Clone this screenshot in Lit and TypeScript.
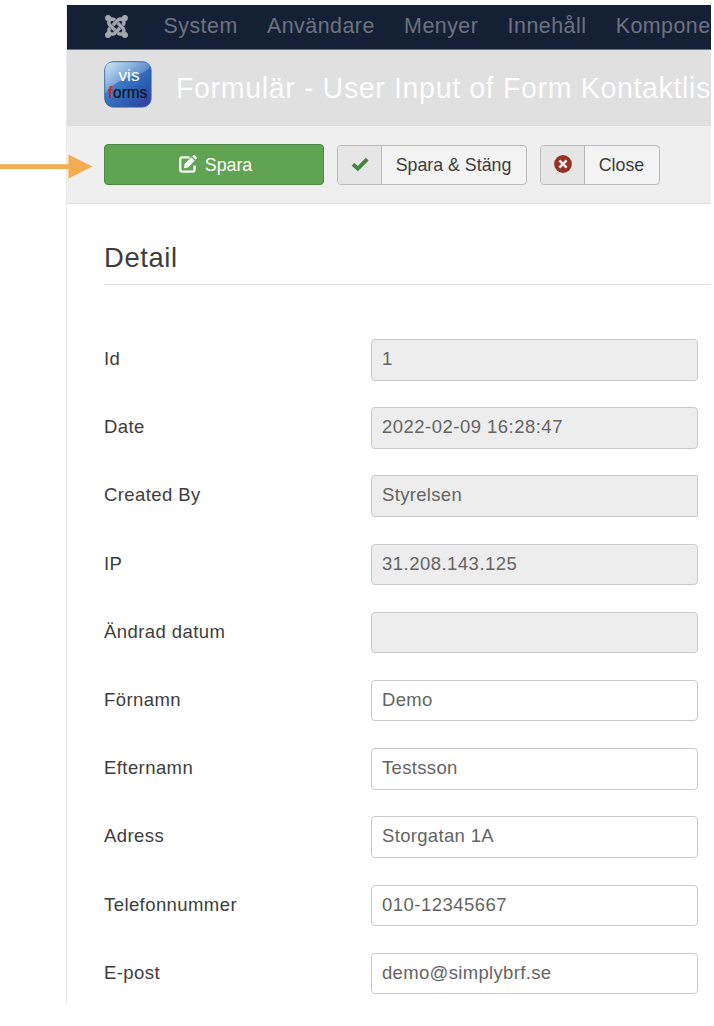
import { LitElement, html, css, svg } from "lit";
import { customElement } from "lit/decorators.js";
import { classMap } from "lit/directives/class-map.js";

interface Field {
  label: string;
  value: string;
  kind: "readonly" | "joined" | "edit";
  numeric?: boolean;
}

const NAV = ["System", "Användare", "Menyer", "Innehåll", "Kompone"];

const FIELDS: Field[] = [
  { label: "Id", value: "1", kind: "readonly" },
  { label: "Date", value: "2022-02-09 16:28:47", kind: "readonly", numeric: true },
  { label: "Created By", value: "Styrelsen", kind: "joined" },
  { label: "IP", value: "31.208.143.125", kind: "readonly", numeric: true },
  { label: "Ändrad datum", value: "", kind: "readonly" },
  { label: "Förnamn", value: "Demo", kind: "edit" },
  { label: "Efternamn", value: "Testsson", kind: "edit" },
  { label: "Adress", value: "Storgatan 1A", kind: "edit" },
  { label: "Telefonnummer", value: "010-12345667", kind: "edit", numeric: true },
  { label: "E-post", value: "demo@simplybrf.se", kind: "edit" },
];

const joomla = html`<svg class="joomla" viewBox="0 32 448 448">
  <path d="M.6 92.1C.6 58.8 27.4 32 60.4 32c30 0 54.5 21.9 59.2 50.2 32.6-7.6 67.1.6 96.5 30l-44.3 44.3c-20.5-20.5-42.6-16.3-55.4-3.5-14.3 14.3-14.3 37.9 0 52.2l99.5 99.5-44 44.3c-87.7-87.2-49.7-49.7-99.8-99.7-26.8-26.5-35-64.8-24.8-98.9C20.4 144.6.6 120.7.6 92.1zm129.5 116.4l44.3 44.3c10-10 89.7-89.7 99.7-99.8 14.3-14.3 37.6-14.3 51.9 0 12.8 12.8 17 35-3.5 55.4l44 44.3c31.2-31.2 38.5-67.6 28.9-101.2 29.2-4.1 51.9-29.2 51.9-59.5 0-33.2-26.8-60.1-59.8-60.1-30.3 0-55.4 22.5-59.5 51.6-33.8-9.9-71.7-1.5-98.3 25.1-18.3 19.1-71.1 71.5-99.6 99.9zm266.3 152.2c8.2-32.7-.9-68.5-26.3-93.9-11.8-12.2 5 4.7-99.5-99.7l-44.3 44.3 99.7 99.7c14.3 14.3 14.3 37.6 0 51.9-12.8 12.8-35 17-55.4-3.5l-44 44.3c27.6 30.2 68 38.8 102.7 28 5.5 27.4 29.7 48.1 58.9 48.1 33 0 59.8-26.8 59.8-60.1 0-30.2-22.5-55-51.6-59.1zm-84.3-53.1l-44-44.3c-87 86.4-50.4 50.4-99.7 99.8-14.3 14.3-37.6 14.3-51.9 0-13.1-13.4-16.9-35.3 3.2-55.4l-44-44.3c-30.2 30.2-38 65.2-29.5 98.3-26.7 6-46.2 29.9-46.2 58.2C0 453.2 26.8 480 59.8 480c28.6 0 52.5-19.8 58.6-46.7 32.7 8.2 68.5-.6 94.2-26 32.1-32 12.2-12.4 99.5-99.7z"/>
</svg>`;

const brand = html`<svg class="brand" viewBox="0 0 48 47">
  <defs>
    <linearGradient id="face" x1="0" y1="0" x2="1" y2="1">
      <stop offset="0" stop-color="#7fb9e6"/>
      <stop offset="0.4" stop-color="#3a78c4"/>
      <stop offset="0.7" stop-color="#2c5cb0"/>
      <stop offset="1" stop-color="#3c359c"/>
    </linearGradient>
    <linearGradient id="gloss" x1="0" y1="0" x2="0.8" y2="0.8">
      <stop offset="0" stop-color="#fff" stop-opacity="0.6"/>
      <stop offset="1" stop-color="#fff" stop-opacity="0.08"/>
    </linearGradient>
  </defs>
  <rect x="0.7" y="0.7" width="46.4" height="45.4" rx="8.5" fill="url(#face)" stroke="#2d63ad" stroke-width="0.9"/>
  <path d="M1.2 32V9Q1.2 1.2 9 1.2H39Q44 1.2 46 5C41 17 18 12 1.2 32Z" fill="url(#gloss)"/>
  ${svg`<text class="vis" x="14.5" y="20.2" textLength="21" lengthAdjust="spacingAndGlyphs">vis</text>
  <text class="forms red" x="4" y="36.7" textLength="5" lengthAdjust="spacingAndGlyphs">f</text>
  <text class="forms" x="9.1" y="36.7" textLength="34.2" lengthAdjust="spacingAndGlyphs">orms</text>`}
</svg>`;

@customElement("app-root")
export class AppRoot extends LitElement {
  static styles = css`
    :host {
      display: block;
      position: relative;
      box-sizing: border-box;
      width: 714px;
      height: 1026px;
      padding: 5px 3px 21px 66px;
      background: #fff;
      overflow: hidden;
      font-family: "Liberation Sans", Arial, sans-serif;
      font-size: 18.5px;
      color: #3d3d3d;
    }
    * { box-sizing: border-box; }
    .page {
      height: 1000px;
      border-left: 1px solid #ebebeb;
      overflow: hidden;
    }
    .nav {
      display: flex;
      align-items: center;
      height: 45px;
      padding-left: 38px;
      background: #142036;
      border-bottom: 1px solid #6d727b;
      color: #6c737e;
      font-size: 21.4px;
      letter-spacing: 0.48px;
      white-space: nowrap;
    }
    .joomla { width: 23px; height: 23px; margin-right: 35.5px; margin-bottom: 2px; fill: #a3a7ae; stroke: #a3a7ae; stroke-width: 6; flex: none; }
    .item { margin-right: 29.3px; line-height: 24px; margin-bottom: 2px; }
    .head {
      display: flex;
      align-items: center;
      height: 75px;
      padding: 0 0 7px 37px;
      background: #e0e0e0;
      white-space: nowrap;
    }
    .brand { width: 48px; height: 47px; flex: none; }
    .vis { font-size: 17px; fill: #fff; }
    .forms { font-size: 16px; fill: #10131c; stroke: #10131c; stroke-width: 0.2px; }
    .red { fill: #d8232f; font-weight: bold; stroke: none; }
    .title { margin: 7px 0 0 24px; font-size: 28.6px; font-weight: 400; letter-spacing: 0.62px; color: #fcfcfc; line-height: 34px; }
    .toolbar {
      display: flex;
      gap: 13px;
      height: 79px;
      padding: 18px 0 0 37px;
      background: #efefef;
      border-top: 1px solid #dcdcdc;
      border-bottom: 1px solid #dedede;
      font-size: 17.8px;
    }
    .save {
      display: flex;
      justify-content: center;
      align-items: center;
      gap: 8px;
      width: 220px;
      height: 41px;
      border: 1px solid #4a8a42;
      border-radius: 4px;
      background: #60a453;
      color: #fff;
      padding-left: 3px;
    }
    .save span { margin-top: 1px; }
    .edit { width: 18px; height: 18px; margin-top: -2px; }
    .button {
      display: flex;
      height: 40px;
      margin-top: 0.5px;
      border: 1px solid #bababa;
      border-radius: 4px;
      background: #f3f3f3;
      overflow: hidden;
    }
    .stang { width: 190px; }
    .close { width: 120px; }
    .lead {
      display: flex;
      align-items: center;
      justify-content: center;
      width: 44px;
      background: #e6e6e6;
      border-right: 1px solid #bababa;
      padding-bottom: 2px;
    }
    .lead svg { width: 18px; height: 18px; }
    .text { flex: 1; text-align: center; line-height: 39px; white-space: nowrap; margin-left: -1px; }
    .body { padding: 36px 0 0 37px; }
    .detail {
      height: 45px;
      margin: 0 0 54px;
      border-bottom: 1px solid #e2e2e2;
      font-size: 27.4px;
      font-weight: 400;
      letter-spacing: 0.6px;
      line-height: 35px;
    }
    .fields { display: grid; grid-auto-rows: 68.2px; }
    .row { display: grid; grid-template-columns: 267px 327px; align-items: start; }
    .label { line-height: 40px; letter-spacing: 0.42px; }
    .value {
      height: 41.5px;
      border: 1px solid #cbcbcb;
      border-radius: 4px;
      padding-left: 10px;
      line-height: 38px;
      letter-spacing: 0.33px;
      color: #646464;
      white-space: nowrap;
    }
    .numeric { letter-spacing: 0.48px; }
    .readonly { background: #ededed; }
    .joined { border-radius: 4px 0 0 4px; }
    .arrow { position: absolute; left: 0; top: 154px; width: 93px; height: 25px; }
  `;

  render() {
    return html`
      <div class="page">
        <nav class="nav">${joomla}${NAV.map((n) => html`<span class="item">${n}</span>`)}</nav>
        <header class="head">${brand}<h1 class="title">Formulär - User Input of Form Kontaktlis</h1></header>
        <div class="toolbar">
          <div class="save">
            <svg class="edit" viewBox="0 0 17 17">
              <path d="M10 2.2H3Q1.2 2.2 1.2 4V13.8Q1.2 15.7 3 15.7H12.8Q14.7 15.7 14.7 13.8V10" fill="none" stroke="#f4faf3" stroke-width="2.2"/>
              <path d="M4.6 12.4L5.2 8.5L11.6 2.1L14.9 5.4L8.5 11.8ZM12.5 1.3L13.6 0.3Q14.3 -0.2 14.9 0.3L16.7 2.1Q17.2 2.7 16.7 3.3L15.7 4.5Z" fill="#f4faf3"/>
            </svg>
            <span>Spara</span>
          </div>
          <div class="button stang">
            <span class="lead"><svg viewBox="0 0 18 18"><path d="M2 9.2L6.8 13.6L16.3 4.2" fill="none" stroke="#468541" stroke-width="3.9"/></svg></span>
            <span class="text">Spara &amp; Stäng</span>
          </div>
          <div class="button close">
            <span class="lead"><svg viewBox="0 0 18 18"><circle cx="9" cy="9" r="8.9" fill="#94322a"/><path d="M5.4 5.4L12.6 12.6M12.6 5.4L5.4 12.6" stroke="#f3e9e8" stroke-width="2.6"/></svg></span>
            <span class="text">Close</span>
          </div>
        </div>
        <section class="body">
          <h2 class="detail">Detail</h2>
          <div class="fields">
            ${FIELDS.map(
              (f) => html`<div class="row">
                <span class="label">${f.label}</span>
                <div class=${classMap({ value: true, readonly: f.kind !== "edit", joined: f.kind === "joined", numeric: !!f.numeric })}>${f.value}</div>
              </div>`
            )}
          </div>
        </section>
      </div>
      <svg class="arrow" viewBox="0 0 93 25">
        <path d="M0 10.2H68.5V0.5L92.3 12.6L68.5 24.5V15H0Z" fill="#f3ac50"/>
      </svg>
    `;
  }
}
